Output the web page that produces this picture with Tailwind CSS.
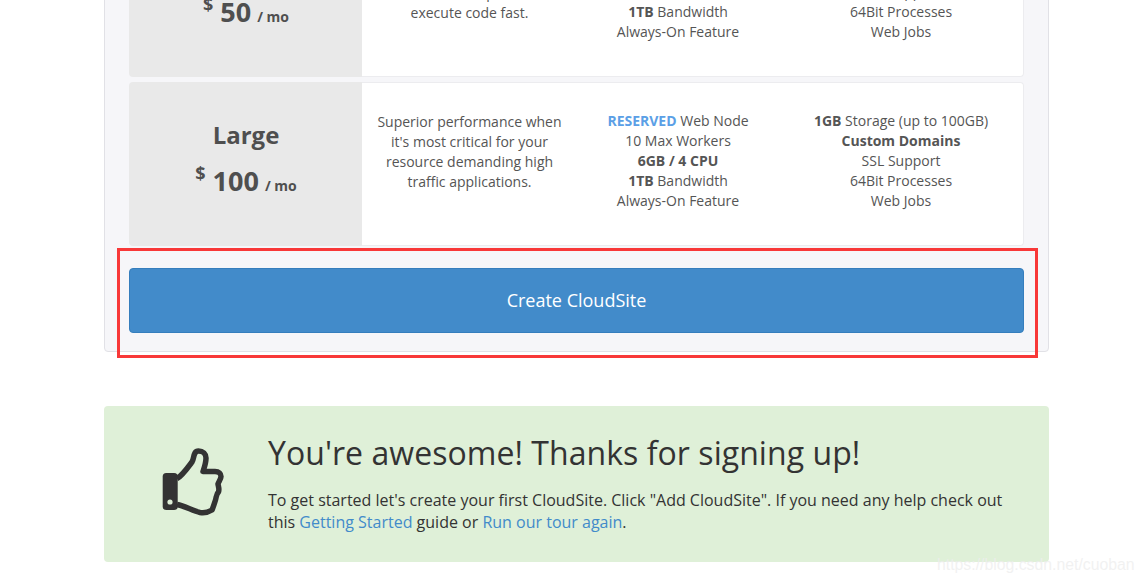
<!DOCTYPE html>
<html lang="en">
<head>
    <meta charset="UTF-8">
    <title>Create CloudSite</title>
    <script src="https://cdn.jsdelivr.net/npm/@tailwindcss/browser@4"></script>
</head>
<body class="bg-white font-['Open_Sans',sans-serif] text-[14px] leading-[20px] text-[#555]">

<div class="relative h-[582px] overflow-hidden">
    <div class="ml-[104px] w-[945px] -mt-[100px]">

        <!-- Plans panel -->
        <div class="bg-[#f6f6f9] border border-[#e1e1e6] rounded-[4px] px-[24px] pt-[12px] pb-[18px]">

            <!-- Plan row -->
            <div class="flex h-[164px]">
                <div class="w-[233px] pl-[1px] bg-[#e9e9e9] rounded-l-[4px] text-center font-bold text-[#4f4f4f]">
                    <div class="text-[24px] leading-[32px] mt-[37px]">Medium</div>
                    <div class="mt-[11px] flex justify-center items-baseline">
                        <span class="text-[18px] relative -top-[11px] mr-[7px]">$</span><span class="text-[27px] leading-[38px]">50</span><span class="ml-[6px]">/ mo</span>
                    </div>
                </div>
                <div class="flex flex-1 bg-white border border-l-0 border-[#ececef] rounded-r-[4px]">
                    <div class="w-[215px] text-center pt-[29px]">Great performance when<br>you need to scale your<br>sites with more power and<br>execute code fast.</div>
                    <div class="w-[202px] text-center pt-[28px]"><b class="text-[#5b9fe6]">SHARED</b> Web Node<br>5 Max Workers<br><b>3GB / 2 CPU</b><br><b>1TB</b> Bandwidth<br>Always-On Feature</div>
                    <div class="flex-1 text-center pt-[28px]"><b>1GB</b> Storage (up to 100GB)<br><b>Custom Domains</b><br>SSL Support<br>64Bit Processes<br>Web Jobs</div>
                </div>
            </div>

            <!-- Plan row -->
            <div class="flex h-[164px] mt-[5px]">
                <div class="w-[233px] pl-[1px] bg-[#e9e9e9] rounded-l-[4px] text-center font-bold text-[#4f4f4f]">
                    <div class="text-[24px] leading-[32px] mt-[37px]">Large</div>
                    <div class="mt-[11px] flex justify-center items-baseline">
                        <span class="text-[18px] relative -top-[11px] mr-[7px]">$</span><span class="text-[27px] leading-[38px]">100</span><span class="ml-[6px]">/ mo</span>
                    </div>
                </div>
                <div class="flex flex-1 bg-white border border-l-0 border-[#ececef] rounded-r-[4px]">
                    <div class="w-[215px] text-center pt-[29px]">Superior performance when<br>it's most critical for your<br>resource demanding high<br>traffic applications.</div>
                    <div class="w-[202px] text-center pt-[28px]"><b class="text-[#5b9fe6]">RESERVED</b> Web Node<br>10 Max Workers<br><b>6GB / 4 CPU</b><br><b>1TB</b> Bandwidth<br>Always-On Feature</div>
                    <div class="flex-1 text-center pt-[28px]"><b>1GB</b> Storage (up to 100GB)<br><b>Custom Domains</b><br>SSL Support<br>64Bit Processes<br>Web Jobs</div>
                </div>
            </div>

            <button class="block w-full h-[65px] mt-[22px] pb-[2px] bg-[#428bca] border border-[#357ebd] rounded-[4px] text-white text-[18px]">Create CloudSite</button>
        </div>

        <!-- Welcome alert -->
        <div class="flex mt-[54px] h-[156px] bg-[#dff0d8] rounded-[4px] text-[#333]">
            <div class="w-[164px] pl-[56px] pt-[39px] shrink-0">
                <svg class="w-[68px] h-[74px]" viewBox="0 0 68 74" fill="none">
                    <rect x="2.7" y="28" width="15" height="37" rx="3.5" fill="#333"/>
                    <circle cx="10" cy="57" r="2.6" fill="#dff0d8"/>
                    <path d="M17 33.5C22 31 29 21 32 17C34.5 13 33 6 38.5 6C43 6 46 9 46 13C46 18 44.5 22 43 26.5L55 26.5C59 26.5 61 29 61 31.5C61 34 58.5 37 58 39C58.5 42 59.5 44 58.5 47C56 49 56.5 52 55.5 55C54.5 58 53 63 52 65C48 67.5 43 68 40 67.5C33 66 25 61 17 59.5" stroke="#333" stroke-width="5.5" stroke-linejoin="round"/>
                </svg>
            </div>
            <div class="pt-[25px]">
                <h2 class="text-[32px] leading-[44px] tracking-[0.05px]">You're awesome! Thanks for signing up!</h2>
                <p class="mt-[14px] text-[16px] leading-[22px]">To get started let's create your first CloudSite. Click "Add CloudSite". If you need any help check out<br>this <a class="text-[#428bca]">Getting Started</a> guide or <a class="text-[#428bca]">Run our tour again</a>.</p>
            </div>
        </div>
    </div>

    <!-- Annotation drawn on top of the screenshot -->
    <div class="absolute left-[117px] top-[248px] w-[921px] h-[110px] border-[3px] border-[#f83838]"></div>
    <div class="absolute left-[937px] top-[555px] font-['Liberation_Sans',sans-serif] text-[15.8px] text-[#eeeeee]/80">https://blog.csdn.net/cuoban</div>
</div>

</body>
</html>
